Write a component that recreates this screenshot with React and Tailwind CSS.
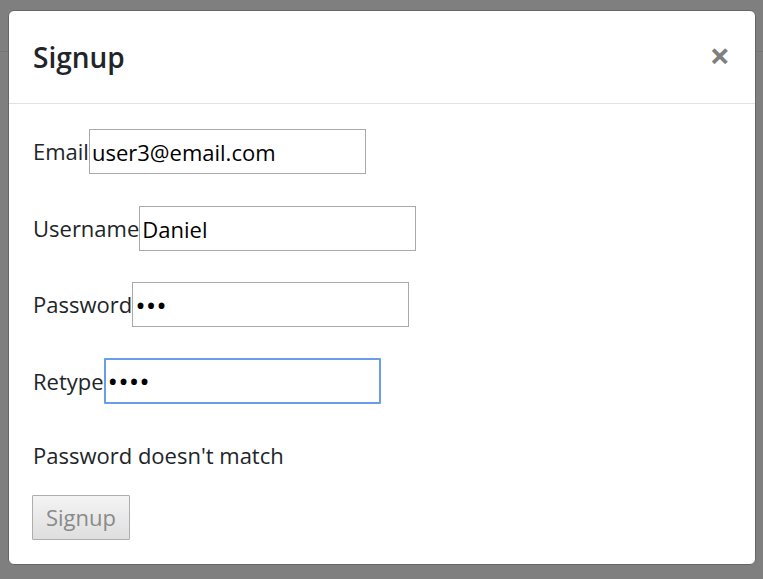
import { useState } from 'react';

const Field = ({ label, type = 'text', value, focused, gap = 'mb-[31px]' }) => (
  <div className={`flex items-center ${gap}`}>
    <label className="text-[#212529]">{label}</label>
    <input
      type={type}
      defaultValue={value}
      className={`w-[277px] h-[45px] px-[2px] text-black bg-white outline-none ${
        type === 'password' ? 'text-[28px]' : ''
      } ${focused ? 'h-[46px] border-2 border-[#6a9de8] rounded-[1px]' : 'border border-[#a9a9a9]'}`}
    />
  </div>
);

const App = () => {
  const [open] = useState(true);

  return (
    <div
      className="relative w-[763px] h-[579px] bg-[#7f7f7f] overflow-hidden"
      style={{ fontFamily: '"Open Sans", "Noto Sans", sans-serif' }}
    >
      {/* page behind the overlay */}
      <div className="h-[52px] border-b border-[#767676]" />

      {open && (
        <div className="absolute inset-0 pt-[10px] pl-[8px]">
          <div className="w-[748px] bg-white border border-[#666] rounded-[6px] text-[22px]">
            <div className="flex items-center justify-between h-[93px] px-[24px] border-b border-[#dee2e6]">
              <h5 className="text-[28px] font-semibold text-[#212529] leading-none">Signup</h5>
              <button className="text-[36px] font-bold text-black/50 leading-none -mt-[2px] mr-[1px]">
                ×
              </button>
            </div>

            <div className="px-[24px] pt-[25px] pb-[24px]">
              <Field label="Email" value="user3@email.com" gap="mb-[32px]" />
              <Field label="Username" value="Daniel" />
              <Field label="Password" type="password" value="abc" />
              <Field label="Retype" type="password" value="abcd" focused gap="mb-[33px]" />

              <p className="h-[36px] leading-[36px] text-[#212529]">Password doesn't match</p>

              <button
                disabled
                className="block mt-[22px] -ml-[1px] h-[45px] px-[13px] border border-[#adadad] bg-gradient-to-b from-[#f4f4f4] to-[#dedede] text-[#8a8a8a] rounded-[1px]"
              >
                Signup
              </button>
            </div>
          </div>
        </div>
      )}
    </div>
  );
};

export default App;
